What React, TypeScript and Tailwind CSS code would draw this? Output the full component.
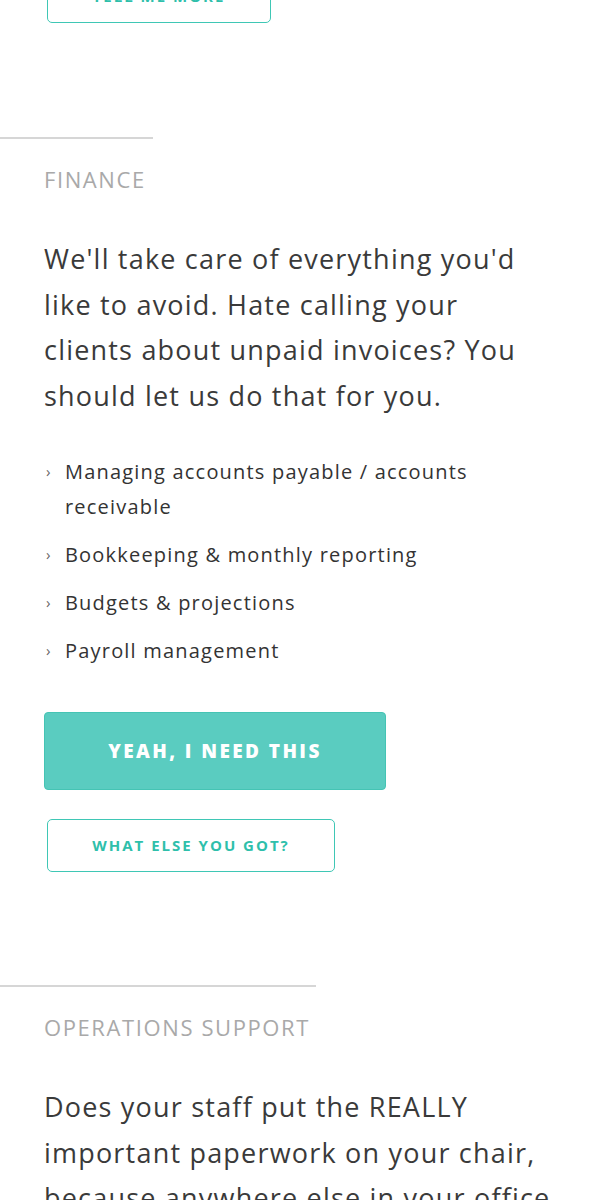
import React from "react";

const font = { fontFamily: '"Open Sans", "Liberation Sans", sans-serif' };

interface Section {
  label: string;
  lead: string;
  items?: string[];
}

const finance: Section = {
  label: "FINANCE",
  lead: "We'll take care of everything you'd like to avoid. Hate calling your clients about unpaid invoices? You should let us do that for you.",
  items: [
    "Managing accounts payable / accounts receivable",
    "Bookkeeping & monthly reporting",
    "Budgets & projections",
    "Payroll management",
  ],
};

function OutlineButton({ children, width }: { children: React.ReactNode; width: string }) {
  return (
    <button
      className={`${width} h-[53px] ml-[3px] rounded-[5px] border-[1.5px] border-[#3fc7b5] bg-white text-[#2fbfab] text-[15px] font-bold tracking-[2px]`}
    >
      {children}
    </button>
  );
}

export default function App() {
  return (
    <div className="w-[600px] h-[1200px] overflow-hidden bg-white text-[#3a3a3a]" style={font}>
      {/* tail of previous section */}
      <div className="px-[44px] -mt-[30px]">
        <OutlineButton width="w-[224px]">TELL ME MORE</OutlineButton>
      </div>

      {/* Finance */}
      <div className="mt-[114px] h-[2px] w-[153px] bg-[#d6d6d6]" />
      <div className="px-[44px]">
        <p className="mt-[25px] text-[22px] leading-[30px] tracking-[1.6px] text-[#a9a9a9]">{finance.label}</p>
        <p className="mt-[42px] w-[508px] text-[27px] leading-[45.7px] tracking-[1.2px]">{finance.lead}</p>
        <ul className="mt-[35px] flex flex-col gap-[13px]">
          {finance.items?.map((it) => (
            <li key={it} className="flex text-[20px] leading-[35px] tracking-[1.2px] text-[#333]">
              <span className="w-[21px] shrink-0 pl-[2px] text-[15px] text-[#666]">›</span>
              <span>{it}</span>
            </li>
          ))}
        </ul>
        <button className="mt-[44px] w-[342px] h-[78px] rounded-[4px] border border-[#45c4b4] bg-[#5accc0] text-white text-[19px] font-extrabold tracking-[2.4px]">
          YEAH, I NEED THIS
        </button>
        <div className="mt-[29px]">
          <OutlineButton width="w-[288px]">WHAT ELSE YOU GOT?</OutlineButton>
        </div>
      </div>

      {/* Operations support */}
      <div className="mt-[113px] h-[2px] w-[316px] bg-[#d6d6d6]" />
      <div className="px-[44px]">
        <p className="mt-[25px] text-[22px] leading-[30px] tracking-[1.6px] text-[#a9a9a9]">OPERATIONS SUPPORT</p>
        <p className="mt-[42px] w-[508px] text-[27px] leading-[45.7px] tracking-[1.2px]">
          Does your staff put the REALLY important paperwork on your chair, because anywhere else in your office it will get lost?
        </p>
      </div>
    </div>
  );
}
